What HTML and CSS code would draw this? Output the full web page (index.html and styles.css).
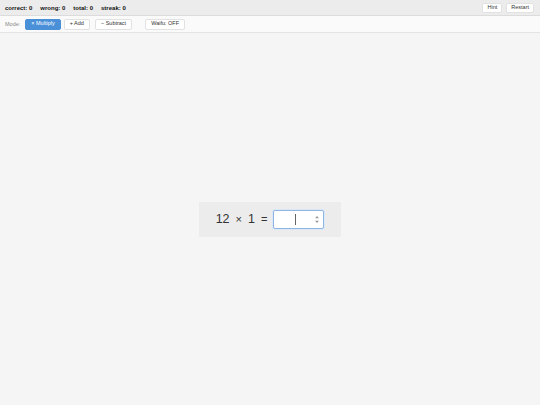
FILE: index.html
```html
<!DOCTYPE html>
<html lang="en">
<head>
<meta charset="utf-8">
<title>Math Drill</title>
<link rel="stylesheet" href="styles.css">
</head>
<body>
<div class="app">
  <header class="topbar">
    <div class="stats">
      <span class="stat">correct: 0</span>
      <span class="stat">wrong: 0</span>
      <span class="stat">total: 0</span>
      <span class="stat">streak: 0</span>
    </div>
    <div class="actions">
      <button class="btn">Hint</button>
      <button class="btn">Restart</button>
    </div>
  </header>
  <nav class="modebar">
    <span class="mode-label">Mode:</span>
    <button class="btn mode active">× Multiply</button>
    <button class="btn mode">+ Add</button>
    <button class="btn mode sub">− Subtract</button>
    <button class="btn mode waifu">Waifu: OFF</button>
  </nav>
  <main class="stage">
    <div class="card">
      <span class="num">12</span>
      <span class="op">×</span>
      <span class="num">1</span>
      <span class="op">=</span>
      <div class="answer-box">
        <input class="answer" type="number" autofocus>
        <span class="caret"></span>
        <span class="spin">
          <svg width="4" height="9" viewBox="0 0 4 9"><path d="M0 3.2 L2 1 L4 3.2 Z M0 5.8 L2 8 L4 5.8 Z" fill="#999"/></svg>
        </span>
      </div>
    </div>
  </main>
</div>
</body>
</html>
```
FILE: styles.css
```css
* { box-sizing: border-box; }
html, body { margin: 0; height: 100%; }
body {
  background: #f5f5f5;
  font-family: "Liberation Sans", Arial, sans-serif;
  color: #222;
}
.app { display: flex; flex-direction: column; height: 100%; }
.topbar {
  height: 16px;
  background: #ececec;
  border-bottom: 1px solid #dcdcdc;
  padding: 0 6px 0 5px;
  display: flex;
  align-items: center;
  justify-content: space-between;
}
.stats { display: flex; gap: 8px; }
.stat { font-size: 6px; font-weight: bold; color: #111; }
.actions { display: flex; gap: 4px; }
.btn {
  font-family: "Liberation Sans", Arial, sans-serif;
  font-size: 5.5px;
  color: #333;
  background: #fff;
  border: 1px solid #e2e2e2;
  border-radius: 2px;
  height: 11px;
  padding: 0 5px;
  line-height: 1;
  margin: 0;
}
.actions .btn { height: 10px; padding: 0 4px; }
.modebar {
  height: 17px;
  background: #fafafa;
  border-bottom: 1px solid #e4e4e4;
  padding: 0 5px;
  display: flex;
  align-items: center;
}
.mode-label { font-size: 5.5px; color: #888; margin-right: 5px; }
.mode { margin-right: 3px; }
.mode.sub { margin-left: 2px; }
.mode.waifu { margin-left: 10px; }
.mode.active {
  background: #4a90d9;
  border-color: #4a90d9;
  color: #fff;
}
.stage {
  flex: 1;
  display: flex;
  align-items: center;
  justify-content: center;
}
.card {
  background: #ececec;
  width: 142px;
  height: 35px;
  display: flex;
  align-items: center;
  justify-content: center;
  gap: 6px;
  padding: 0 17px;
  font-size: 12.5px;
  color: #333;
}
.op { font-size: 11px; }
.answer-box {
  position: relative;
  display: flex;
  align-items: center;
  width: 51px;
  height: 19px;
  border: 1px solid #8fb5e0;
  border-radius: 2px;
  background: #fff;
  box-shadow: 0 0 0 1px #dbe8f7;
}
.answer {
  flex: 1;
  min-width: 0;
  height: 100%;
  border: none;
  background: transparent;
  font-family: "Liberation Sans", Arial, sans-serif;
  font-size: 12px;
  text-align: center;
  padding: 0 0 0 6px;
  outline: none;
  caret-color: transparent;
  -moz-appearance: textfield;
}
.answer::-webkit-inner-spin-button,
.answer::-webkit-outer-spin-button { -webkit-appearance: none; margin: 0; }
.caret {
  position: absolute;
  left: 21px;
  top: 3px;
  width: 1px;
  height: 11px;
  background: #666;
}
.spin { display: flex; align-items: center; padding: 0 4px 0 2px; }
.spin svg { display: block; }
```
